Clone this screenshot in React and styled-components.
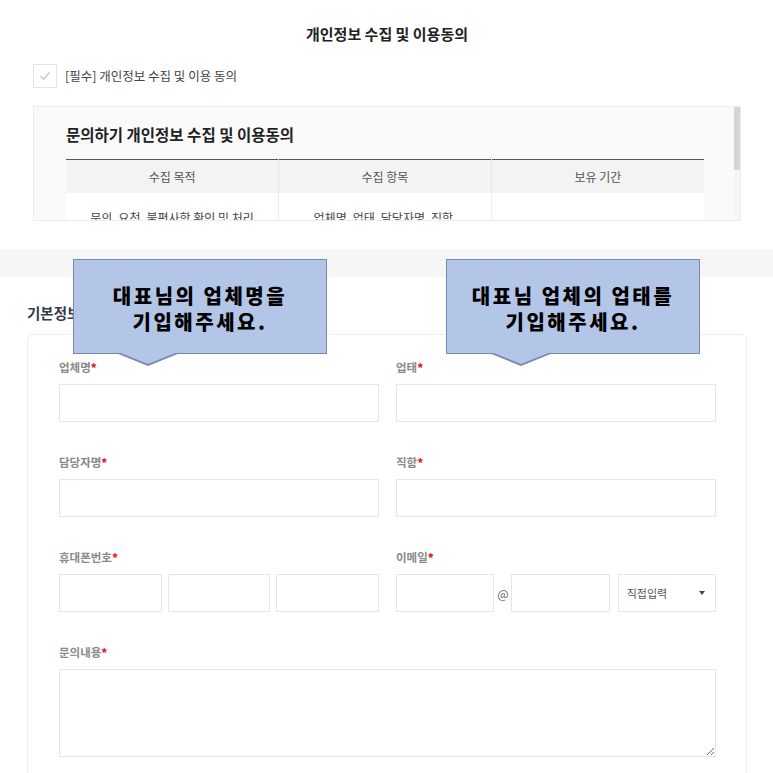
import React from "react"
import styled, { createGlobalStyle } from "styled-components"

const Global = createGlobalStyle`
  * { box-sizing: border-box; }
  body {
    margin: 0;
    background: #fff;
    font-family: "Noto Sans CJK KR", "Noto Sans", sans-serif;
    color: #333;
  }
`;

const Page = styled.div`
  width: 773px;
`;

const Agree = styled.section`
  padding: 24px 32px 0 33px;
`;

const Title = styled.h2`
  margin: 0 0 20px;
  text-align: center;
  font-size: 15px;
  line-height: 20px;
  font-weight: 700;
  color: #222;
`;

const CheckRow = styled.label`
  display: flex;
  align-items: center;
  gap: 8px;
  font-size: 12.5px;
  line-height: 24px;
  color: #444;
  margin-bottom: 18px;
`;

const CheckBox = styled.span`
  width: 24px;
  height: 24px;
  border: 1px solid #e4e4e4;
  display: flex;
  align-items: center;
  justify-content: center;
  background: #fff;
`;

const ScrollBox = styled.div`
  position: relative;
  height: 115px;
  border: 1px solid #ececec;
  background: #fafafa;
  overflow: hidden;
  padding: 16px 36px 0 32px;
`;

const ScrollTrack = styled.div`
  position: absolute;
  top: 0;
  right: 0;
  bottom: 0;
  width: 6px;
  background: #f6f6f6;
`;

const ScrollThumb = styled.div`
  height: 63px;
  background: #d5d5d5;
`;

const BoxTitle = styled.h3`
  margin: 0 0 14px;
  font-size: 15.5px;
  line-height: 22px;
  font-weight: 700;
  color: #222;
`;

const Table = styled.table`
  width: 100%;
  border-collapse: collapse;
  table-layout: fixed;
  border-top: 1px solid #555;
  font-size: 12px;
  color: #444;
`;

const Th = styled.th`
  height: 33px;
  background: #f3f3f3;
  font-weight: 400;
  color: #555;
  border-left: 1px solid #e6e6e6;
  &:first-child { border-left: 0; }
`;

const Td = styled.td`
  background: #fff;
  text-align: center;
  vertical-align: ${p => p.$middle ? "middle" : "top"};
  padding: 16px 10px;
  line-height: 18px;
  border-left: 1px solid #eee;
  &:first-child { border-left: 0; }
`;

const Band = styled.div`
  height: 28px;
  background: #f6f6f6;
  margin-top: 28px;
`;

const Info = styled.section`
  position: relative;
  padding: 25px 26px 0 27px;
`;

const InfoTitle = styled.h3`
  margin: 0 0 10px;
  font-size: 14.5px;
  line-height: 22px;
  font-weight: 700;
  color: #353b48;
`;

const Card = styled.div`
  border: 1px solid #eee;
  border-radius: 6px;
  padding: 24px 30px 40px 31px;
  display: grid;
  grid-template-columns: 320px 320px;
  column-gap: 17px;
  row-gap: 32px;
`;

const Field = styled.div`
  grid-column: ${p => p.$wide ? "1 / -1" : "auto"};
`;

const Label = styled.div`
  font-size: 11.5px;
  line-height: 16px;
  font-weight: 700;
  color: #8a8a8a;
  margin-bottom: 9px;
  & b { color: #e0262a; }
`;

const Input = styled.input`
  display: block;
  width: 100%;
  min-width: 0;
  height: 38px;
  padding: 0 8px;
  border: 1px solid #e6e6e6;
  background: #fff;
  outline: none;
  font: inherit;
`;

const Split = styled.div`
  display: grid;
  grid-template-columns: repeat(3, 1fr);
  gap: 6px;
`;

const EmailRow = styled.div`
  display: flex;
  align-items: center;
`;

const EmailInput = styled(Input)`
  flex: 1 1 0;
`;

const At = styled.span`
  width: 17px;
  text-align: center;
  font-size: 12px;
  color: #666;
`;

const Select = styled.div`
  flex: 1 1 0;
  min-width: 0;
  height: 38px;
  margin-left: 8px;
  border: 1px solid #e6e6e6;
  display: flex;
  align-items: center;
  justify-content: space-between;
  padding: 0 8px;
  font-size: 11px;
  color: #555;
  &::after {
    content: "";
    border-left: 3.5px solid transparent;
    border-right: 3.5px solid transparent;
    border-top: 4px solid #444;
    margin-right: 2px;
  }
`;

const TextArea = styled.textarea`
  display: block;
  width: 100%;
  height: 88px;
  border: 1px solid #e6e6e6;
  resize: vertical;
  outline: none;
  font: inherit;
`;

const Callout = styled.div`
  position: absolute;
  top: -18px;
  left: ${p => p.$left}px;
  width: 254px;
  height: 95px;
  background: #b4c6e7;
  border: 1px solid #7389b4;
  display: flex;
  align-items: center;
  justify-content: center;
  text-align: center;
  padding-top: 4px;
  font-size: 20px;
  line-height: 26px;
  font-weight: 900;
  letter-spacing: 2.5px;
  color: #000;
  z-index: 2;

  &::before, &::after {
    content: "";
    position: absolute;
    left: ${p => p.$tip}px;
    transform: translateX(-50%);
    width: 0;
    height: 0;
  }
  &::before {
    top: 100%;
    border-left: 32px solid transparent;
    border-right: 32px solid transparent;
    border-top: 13px solid #7389b4;
  }
  &::after {
    top: calc(100% - 1px);
    border-left: 30px solid transparent;
    border-right: 30px solid transparent;
    border-top: 12px solid #b4c6e7;
  }
`;

const fields = ["업체명", "업태", "담당자명", "직함"];

export default function App() {
  return (
    <Page>
      <Global />
      <Agree>
        <Title>개인정보 수집 및 이용동의</Title>
        <CheckRow>
          <CheckBox>
            <svg width="12" height="10" viewBox="0 0 12 10">
              <path d="M1.5 5.2 L4.5 8.2 L10.5 1.5" fill="none" stroke="#c8c8c8" strokeWidth="1.3" />
            </svg>
          </CheckBox>
          [필수] 개인정보 수집 및 이용 동의
        </CheckRow>
        <ScrollBox>
          <BoxTitle>문의하기 개인정보 수집 및 이용동의</BoxTitle>
          <Table>
            <thead>
              <tr>
                <Th>수집 목적</Th>
                <Th>수집 항목</Th>
                <Th>보유 기간</Th>
              </tr>
            </thead>
            <tbody>
              <tr>
                <Td>문의, 요청, 불편사항 확인 및 처리</Td>
                <Td>업체명, 업태, 담당자명, 직함,<br />휴대폰번호, 이메일, 문의내용</Td>
                <Td $middle>문의 처리 완료 후 1년</Td>
              </tr>
            </tbody>
          </Table>
          <ScrollTrack><ScrollThumb /></ScrollTrack>
        </ScrollBox>
      </Agree>

      <Band />

      <Info>
        <Callout $left={73} $tip={74}>대표님의 업체명을<br />기입해주세요.</Callout>
        <Callout $left={446} $tip={74}>대표님 업체의 업태를<br />기입해주세요.</Callout>

        <InfoTitle>기본정보</InfoTitle>
        <Card>
          {fields.map(name => (
            <Field key={name}>
              <Label>{name}<b>*</b></Label>
              <Input />
            </Field>
          ))}
          <Field>
            <Label>휴대폰번호<b>*</b></Label>
            <Split>
              <Input />
              <Input />
              <Input />
            </Split>
          </Field>
          <Field>
            <Label>이메일<b>*</b></Label>
            <EmailRow>
              <EmailInput />
              <At>@</At>
              <EmailInput />
              <Select>직접입력</Select>
            </EmailRow>
          </Field>
          <Field $wide>
            <Label>문의내용<b>*</b></Label>
            <TextArea />
          </Field>
        </Card>
      </Info>
    </Page>
  )
}
